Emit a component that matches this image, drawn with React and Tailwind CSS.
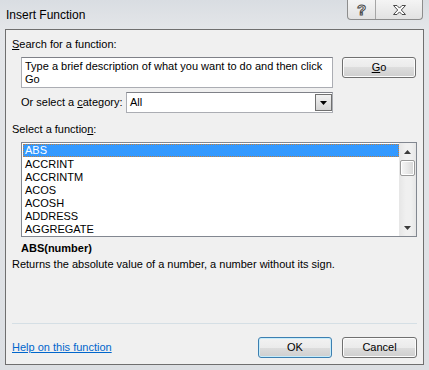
const FONT = "font-['Liberation_Sans',Arial,sans-serif]"

const FUNCS = ["ABS", "ACCRINT", "ACCRINTM", "ACOS", "ACOSH", "ADDRESS", "AGGREGATE"]

function WinButton({ children, primary, className = "" }) {
  return (
    <div
      className={`flex items-center justify-center rounded-[3px] border text-[11px] text-black ${
        primary
          ? "border-[#3c7fb1] shadow-[inset_0_0_0_1px_#c7ecfa]"
          : "border-[#707070] shadow-[inset_0_0_0_1px_#fcfcfc]"
      } bg-[linear-gradient(#f2f2f2_0%,#ebebeb_50%,#dddddd_50%,#cfcfcf_100%)] ${className}`}
    >
      {children}
    </div>
  )
}

function TitleBar() {
  return (
    <div className="flex h-[29px] items-start">
      <div className="pl-[1px] pt-[8px] text-[12px] leading-[14px] text-black">Insert Function</div>
      <div className="ml-auto mr-[1px] flex h-[20px] rounded-b-[4px] border border-t-0 border-[#8d8d8d] bg-[linear-gradient(#f4f4f4,#e2e2e2)]">
        <div className="flex w-[28px] items-center justify-center border-r border-[#a5a5a5]">
          <span className="text-[15px] font-bold leading-none text-white [-webkit-text-stroke:1px_#4a4a4a]">?</span>
        </div>
        <div className="flex w-[46px] items-center justify-center">
          <svg width="15" height="12" viewBox="0 0 15 12">
            <path
              d="M1.5 1.5h3.5l2.5 2.6 2.5-2.6h3.5l-4.2 4.5 4.2 4.5h-3.5l-2.5-2.6-2.5 2.6h-3.5l4.2-4.5z"
              fill="#fff"
              stroke="#4a4a4a"
              strokeWidth="1"
            />
          </svg>
        </div>
      </div>
    </div>
  )
}

function ListBox() {
  return (
    <div className="ml-[15px] mt-[6px] flex h-[95px] w-[396px] border border-[#828790] bg-white">
      <div className="flex-1 pl-px pt-px">
        {FUNCS.map((f, i) => (
          <div
            key={f}
            className={`h-[13px] pl-[2px] text-[11px] ${
              i === 0
                ? "border border-dotted border-[#c08040] bg-[#3399ff] pl-px leading-[11px] text-white"
                : "pt-px leading-[13px] text-black"
            }`}
          >
            {f}
          </div>
        ))}
      </div>
      <div className="flex w-[17px] flex-col items-center bg-[linear-gradient(90deg,#e6e6e6,#f0f0f0_40%,#f0f0f0_70%,#e6e6e6)]">
        <div className="flex h-[17px] w-full items-center justify-center">
          <svg width="7" height="4" viewBox="0 0 7 4">
            <path d="M3.5 0L7 4H0z" fill="#3a3a3a" />
          </svg>
        </div>
        <div className="h-[16px] w-[15px] rounded-[2px] border border-[#9a9a9a] bg-[linear-gradient(90deg,#f6f6f6,#e8e8e8_50%,#d6d6d6)] shadow-[inset_0_0_0_1px_#fff]" />
        <div className="flex-1" />
        <div className="flex h-[17px] w-full items-center justify-center">
          <svg width="7" height="4" viewBox="0 0 7 4">
            <path d="M0 0h7L3.5 4z" fill="#3a3a3a" />
          </svg>
        </div>
      </div>
    </div>
  )
}

export default function App() {
  return (
    <div className={`${FONT} flex h-[370px] w-[429px] flex-col bg-[linear-gradient(#d9dde2,#e4e6e9_30px,#dcdfe3)] pb-[5px] pl-[5px] pr-[5px]`}>
      <TitleBar />
      <div className="flex flex-1 flex-col border border-[#6f6f6f] bg-[#f0f0f0] text-[11px] text-black">
        <div className="ml-[6px] mt-[7px] leading-[14px]">
          <span className="underline">S</span>earch for a function:
        </div>

        <div className="mt-[6px] flex items-start">
          <div className="ml-[15px] h-[31px] w-[312px] border border-[#abadb3] border-t-[#7f8188] bg-white px-[3px] pt-[2px] leading-[13px]">
            Type a brief description of what you want to do and then click Go
          </div>
          <WinButton className="ml-[9px] h-[21px] w-[74px]">
            <span>
              <span className="underline">G</span>o
            </span>
          </WinButton>
        </div>

        <div className="mt-[4px] flex items-center">
          <div className="ml-[15px] w-[105px]">
            Or select a <span className="underline">c</span>ategory:
          </div>
          <div className="flex h-[21px] w-[207px] items-center border border-[#abadb3] border-t-[#7f8188] bg-white">
            <div className="flex-1 pl-[3px]">All</div>
            <div className="flex h-[17px] w-[17px] items-center justify-center border border-[#707070] bg-[linear-gradient(#f2f2f2,#d4d4d4)]">
              <svg width="7" height="4" viewBox="0 0 7 4">
                <path d="M0 0h7L3.5 4z" fill="#000" />
              </svg>
            </div>
          </div>
        </div>

        <div className="ml-[6px] mt-[9px] leading-[14px]">
          Select a functio<span className="underline">n</span>:
        </div>

        <ListBox />

        <div className="ml-[15px] mt-[4px] font-bold leading-[14px]">ABS(number)</div>
        <div className="ml-[6px] mt-[2px] leading-[14px]">
          Returns the absolute value of a number, a number without its sign.
        </div>

        <div className="flex-1" />
        <div className="mx-[6px] h-px bg-[#d5dfe5]" />

        <div className="mb-[6px] mt-[13px] flex items-center">
          <div className="ml-[6px] text-[#0066cc] underline">Help on this function</div>
          <WinButton primary className="ml-auto h-[21px] w-[74px]">
            OK
          </WinButton>
          <WinButton className="ml-[10px] mr-[6px] h-[21px] w-[75px]">Cancel</WinButton>
        </div>
      </div>
    </div>
  )
}
